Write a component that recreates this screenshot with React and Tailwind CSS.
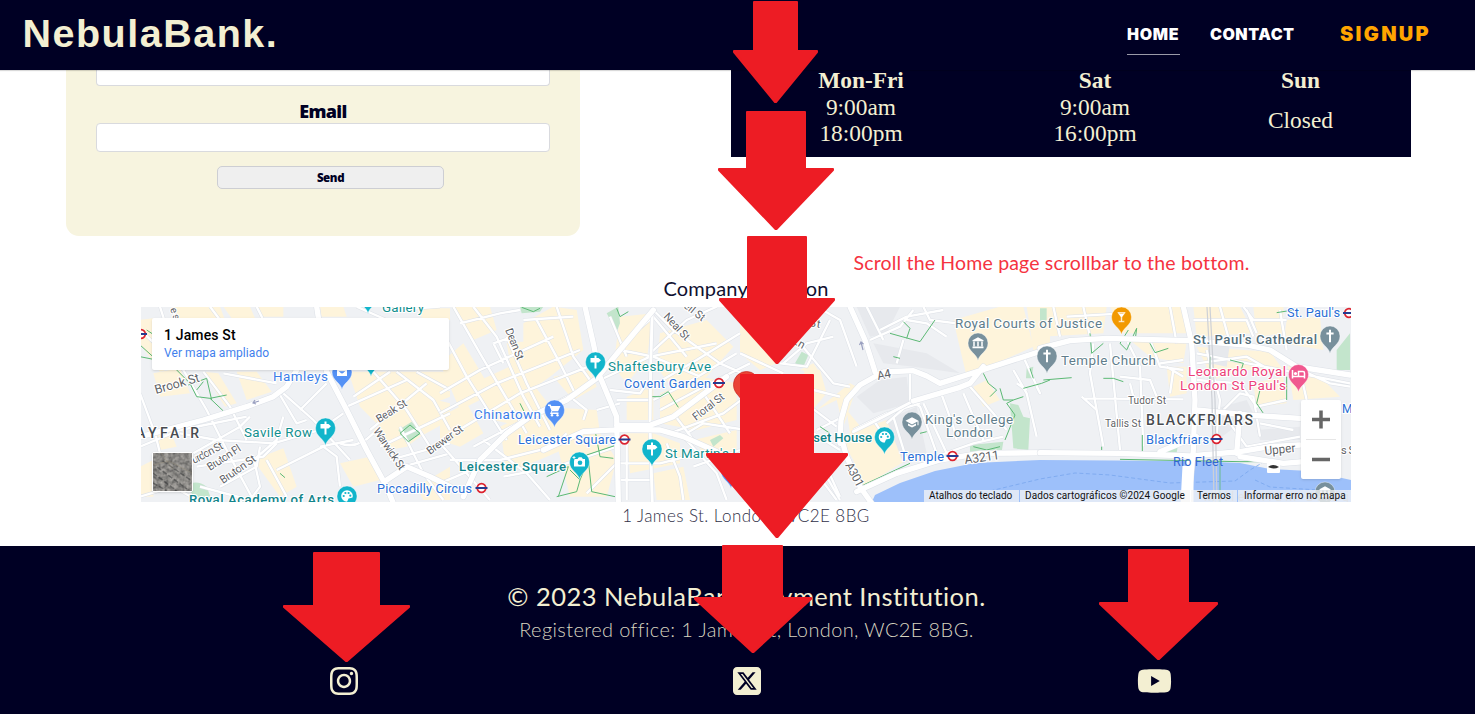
import React from "react";
import { FaInstagram, FaSquareXTwitter, FaYoutube } from "react-icons/fa6";

const TEAL = "#12b5cb";
const BLUE = "#5491f5";
const SLATE = "#78909c";

function Glyph({ kind, color }) {
  const s = { fill: "none", stroke: "#fff", strokeWidth: 2, strokeLinecap: "butt" };
  switch (kind) {
    case "sign":
      return <path d="M-5 -4h8l2.5 2.2L3 .5h-8zM-1 -6.500h2V6.500h-2z" fill="#fff" />;
    case "cart":
      return (
        <g fill="#fff">
          <path d="M-6.500 -5.500h2.600l.7 1.500H6L3.600 1.200H-2.200l-.8 1.300H4V4H-4.500L-3 .8-5 -4h-1.500z" />
          <circle cx="-2.500" cy="5.300" r="1.200" />
          <circle cx="3" cy="5.300" r="1.200" />
        </g>
      );
    case "bag":
      return <path d="M-5.500 -4h11v8.500h-11zM-2.500 -.8q2.500 3.600 5 0" fill="#fff" stroke={color} strokeWidth="1" />;
    case "camera":
      return (
        <g>
          <path d="M-5 -3h3l1.300-1.700h2.800L3.400 -3h2.100v7.500h-11V-1z" fill="#fff" />
          <circle cx=".5" cy=".7" r="2.300" fill={color} />
          <path d="M-5.500 -6v3M-7 -4.500h3" stroke="#fff" strokeWidth=".9" />
        </g>
      );
    case "palette":
      return (
        <g>
          <circle r="5.800" fill="#fff" />
          <path d="M0 6L1.500 2.600 6 1.500 5 6z" fill={color} />
          {[[-3.300, 0], [-1.600, -3], [1.600, -3], [3.300, -.3]].map(([x, y], i) => (
            <circle key={i} cx={x} cy={y} r="1.100" fill={color} />
          ))}
        </g>
      );
    case "court":
      return (
        <g fill="#fff">
          <path d="M-5.500 -2.800L0 -5.800 5.500 -2.800v1h-11zM-5.500 3.500h11V5.200h-11z" />
          <path d="M-4 -1.500V3.500M0 -1.500V3.500M4 -1.500V3.500" stroke="#fff" strokeWidth="1.500" />
        </g>
      );
    case "cross":
      return <path d="M0 -6.300V6.300M-3.600 -2.600H3.600" {...s} />;
    case "cap":
      return <path d="M-6.500 -1.200L0 -4.800 6.500 -1.200V3.200H5.500V-.6L0 2.400zM-4 1.400V3.600L0 5.500 4 3.600V1.400L0 3.500z" fill="#fff" />;
    case "drink":
      return <path d="M-4.500 -5h9L.8 .3V3.800H3V5.200H-3V3.800H-.8V.3zM-2 -3.600h4" fill="#fff" stroke={color} strokeWidth=".5" />;
    case "bed":
      return (
        <g>
          <path d="M-6 -4.500V4M-6 2h12M6 4V-1.500Q6 -3 4.500 -3H0V2" {...s} strokeWidth="1.500" />
          <circle cx="-3" cy="-1" r="1.600" fill="#fff" />
        </g>
      );
    default:
      return null;
  }
}

function Pin({ x, y, color, kind }) {
  return (
    <g transform={`translate(${x} ${y})`}>
      <path d="M0 17.500C-1 11-10 8.500-10 0A10 10 0 0 1 10 0C10 8.500 1 11 0 17.500z" fill={color} stroke="#fff" strokeOpacity=".55" strokeWidth=".7" />
      <Glyph kind={kind} color={color} />
    </g>
  );
}

function Tube({ x, y }) {
  return (
    <g transform={`translate(${x} ${y})`}>
      <circle r="4.300" fill="#fff" stroke="#dc2430" strokeWidth="1.700" />
      <path d="M-6 0H6" stroke="#263b8f" strokeWidth="2" />
    </g>
  );
}

function Label({ x, y, w, size = 13.4, color = "#5f6368", weight = 400, rotate, children }) {
  return (
    <text
      x={x}
      y={y}
      textLength={w}
      fontSize={size}
      fill={color}
      fontWeight={weight}
      transform={rotate ? `rotate(${rotate} ${x} ${y})` : undefined}
      stroke="#fff"
      strokeWidth="2.200"
      strokeLinejoin="round"
      paintOrder="stroke"
    >
      {children}
    </text>
  );
}

const Streets = ({ d, w }) => (
  <>
    <path d={d} stroke="#dde1e7" strokeWidth={w + 3} />
    <path d={d} stroke="#fff" strokeWidth={w} />
  </>
);

/* Each tile is drawn in thirds of a map pixel. */
const tiles = [
  {
    x: 140,
    yellow:
      "M0 60L40 55 95 205 60 215 0 130zM100 20H240L255 60H120zM250 20H330L345 55H275zM540 20H610L620 50H545zM830 25H930V60H850zM40 220L120 205 150 280 60 290zM190 215L235 220 290 310 255 320zM290 215H350L395 275 320 300zM350 20H430V50H360zM625 215H930V290L830 330 780 400 720 380 660 320zM700 390L790 330 890 300 930 310V360L840 410 800 440 745 450zM340 480L430 445 470 560 420 590zM600 490L690 470 720 540 640 560zM40 400L90 390 110 440 60 450zM0 500L40 480V590H0zM830 560L930 500V600H850z",
    small:
      "M0 90L130 210 200 330 270 470 340 600M60 20L120 210M0 280L45 400 60 460M190 215L270 320 320 420M250 220L410 250M0 440L120 390 320 350M430 280L520 360 630 480M480 330L560 250M420 285L470 370 500 360M340 480L410 420 430 350M120 400L230 420 400 430 540 390 610 340M160 460L300 380 330 350M170 500L370 470 410 430M240 560L350 500 360 440M340 470L360 560 330 600M410 510L550 440 590 470 600 560M380 480L440 590M540 440L640 420M600 430Q650 450 700 400M640 290L750 215M620 320L800 240M690 390L860 250M720 440L930 340M750 480L930 430M780 380L850 520 910 600M700 215L800 330 870 440M770 215L880 300 930 390M830 215L930 270M790 500L930 460M0 590L100 560 170 600M180 560L330 600M210 20L240 60M350 20L370 60M770 30L900 20M650 20L740 60",
    main: "M0 410L190 360 320 320 400 290 440 260 470 210M530 20L560 215 620 330 680 450 740 560 760 610M740 540L800 500 870 530 930 560",
    park: "M140 560Q165 535 200 560L215 600H170zM775 390L815 365 845 400 800 430z",
    paths: "M0 135L50 180 0 170M110 210L150 250 170 290 210 295 250 333M145 255L200 235 215 300M170 270L190 245M210 295L260 285M420 520L435 533M20 90L50 110M780 400L810 375 840 400 805 425z",
  },
  {
    x: 440,
    yellow:
      "M40 20H150L170 90 100 120zM250 70L340 20 410 30 430 150 330 230 250 190zM0 190L70 130 160 280 60 330zM200 130L290 120 330 230 230 300zM100 250L230 190 340 330 250 380 160 360zM340 230L450 210 470 260 400 300zM180 380L300 320 470 330 480 400 320 470 200 520zM350 430L480 400 530 480 500 590 390 590zM540 50L640 40 620 180 560 250 520 200zM660 100L800 60 880 140 800 230 700 270 650 200zM560 290L640 260V360H560zM660 280L780 230 890 250V360L770 390 660 370zM560 400H640L720 430V490L570 520zM760 420L890 390V480L800 470zM640 520L730 500 750 600H650zM0 350L80 310 130 400 60 440 0 420z",
    small:
      "M0 80L80 230 200 420M40 20L120 160 220 330 260 400M60 70L180 40 240 30M100 20L170 110 250 290 300 380M160 130L220 110M160 130L190 190M0 280L120 210 340 110M0 340L170 250 420 150M40 400L240 280 470 190M100 440L290 340 400 280M200 110L260 250 330 390M290 60L360 190 410 290M350 20L400 170 450 240M250 60L400 50M130 420L260 520 330 600M0 430L80 520 150 600M30 480H180L340 440 380 400M0 550L140 490M390 290L440 330 430 360M190 530L350 500 530 440M440 580L540 480M530 300H630M510 270L600 280 620 250M480 240L630 170 830 130M540 150L640 170 780 230M560 120L640 50 740 170M640 30L700 90 840 190 930 230M630 160L740 60 830 20M650 250L770 180 900 100M640 300L740 250 890 160M660 330L830 240 930 190M690 400L850 340 930 280M700 340L760 420M790 280L870 400M540 490L660 490 740 470M560 430V600M680 430L720 530 730 600M730 410L830 520 860 600M540 540H640M760 500L900 450M740 400L790 370 920 390M510 50L560 170M470 330L540 310",
    main: "M435 20L460 130 480 230 530 350 535 610M640 30L540 150 470 235 380 300 270 350 200 400 120 480 70 590M530 376H630L700 350 780 290 860 230M310 450L430 395 550 388 660 390 730 410 830 455",
    mid: "M637 30L632 200 630 380 637 610",
    park: "M240 20H310L300 35 245 40zM500 40L535 20 540 70 530 95zM810 420L840 405 850 415 820 440z",
    paths: "M245 22L280 35 300 25M530 25L540 50 565 35M240 310L265 360M630 290L660 290 685 275 715 322M440 465L530 435M465 390L480 470 520 475M385 500L355 590M390 510L420 540 445 480 455 575 525 590M350 590L410 575 420 540M320 530L385 500",
  },
  {
    x: 740,
    yellow:
      "M0 70L60 70 110 190 60 210 0 160zM190 200L240 210 260 280 200 350V260zM230 330L330 250 350 260 310 380 290 300zM320 330L370 390 330 400zM640 60L780 20H850L880 140 680 230zM300 410L440 360 500 480 370 560 340 480zM700 260L740 240 780 300 730 320zM860 20H930V150H880zM180 210L220 190 240 220z",
    gray:
      "M350 20H480L440 100 390 110zM350 290L420 240 500 230 510 310 400 340zM400 130L560 160 660 220 520 200 430 190zM440 360L530 320 560 460 490 490z",
    small:
      "M0 160L130 220M120 190L200 200 270 60M180 130L280 250 330 260M230 20L300 60 350 200M130 190L200 130 280 110M210 320L290 380M220 270L300 290M230 390L310 350M220 400L300 450M250 480L300 590M230 520L290 600M380 20L430 120M420 90L500 50 610 30M390 120L480 80 520 30M500 60L560 70 620 110M490 120L470 190M340 390L440 340 540 310M510 220L510 300 540 320 590 460M440 370L520 300 650 270M600 270L640 380 650 420M550 310L620 460M690 260L760 340 800 390M670 280L730 420M820 210L860 280 890 410M850 170L900 280 890 260M400 360L420 390M460 350L500 480M830 250L860 270M300 600L260 530M560 480L700 430 790 410M550 20L570 60 650 70",
    main: "M330 20L375 120 405 215M300 430L303 360 320 300 360 255 430 216 520 212 560 228 600 250 680 225 930 145M520 303L660 262 690 250 730 200M300 400L320 470 360 560 395 610M350 575L470 520 600 480 720 460 930 458",
    mid: "M340 395L430 350 520 303",
    park: "M165 190L185 155 205 165 190 200zM810 310L835 315 850 350 870 355 865 450 820 445zM690 435L790 425 785 455H690zM860 205L880 200 875 235H858z",
    paths: "M450 100L540 125 585 60M490 65L510 85 500 115M460 170L480 175M730 220L745 250 770 270 750 290M780 265L790 300 820 300 800 310 825 345 795 420M820 300L850 290M850 265L905 250 930 240M870 205L880 235M700 440L740 450 780 440M370 555L510 490M540 400L560 395M240 380L270 400",
  },
  {
    x: 1040,
    yellow:
      "M0 20H200L190 100 0 110zM210 20H430L440 100H250zM460 20H600L640 100 470 110zM640 20H730V100L650 110zM740 60L840 50 850 150 730 130zM270 120L440 125 430 190 330 170zM470 140L690 155 730 210 600 210 520 240zM740 180L850 240 900 290 760 300zM640 250L730 230 740 310 650 320zM380 200H440V280L390 290z",
    gray: "M510 330L620 300 640 340 520 430zM650 390L780 380V420H660zM500 120L570 130 560 200 510 190z",
    small:
      "M40 20L60 110M130 20L150 110M210 130L240 450M160 130L150 220 190 440M260 120L300 200 310 440M330 120L360 200 430 210M130 295L430 298M125 290L170 330M240 230L330 240 350 290M380 200L430 230M460 60L620 60 640 110M540 20L570 130M610 20L640 60 740 60M620 30L650 100M720 30L740 150M470 190L620 170 690 210M470 240L600 250 650 320 740 300M500 150L540 300 530 400M550 330L600 280 640 290 660 410M570 370L620 440 780 410M360 190L430 180M740 190L870 250 930 260M780 210L800 300M470 160L930 250M400 210L390 280M390 20L410 130M80 50L250 40M660 370L760 390M270 250L280 290",
    main: "M0 145L90 122 200 115 450 122 620 135 690 150 770 200 930 225M430 20L455 130 465 300 460 450 445 610M470 330L620 345 780 355M0 458L240 460 450 468 600 455 690 440 780 435M470 410L360 455M600 340L590 460M600 470L730 490 850 480",
    park: "M890 150L930 100V210H890zM0 25H20V60L0 70zM370 455L415 430 410 458z",
    paths: "M150 100L155 160 190 130M265 90L240 130 260 150 290 85 285 125M330 130L345 158 385 145M10 240L95 233M190 235L220 235 250 245M710 38L760 30M510 170V240L500 260M570 180L610 190 600 220M740 230V300M660 270L650 310 670 340M185 440V450M307 405V470M240 478L600 485 700 485",
  },
];

function CityMap() {
  return (
    <svg viewBox="141 307 1210 195" className="block h-[195px] w-[1210px]" fontFamily="Roboto, sans-serif">
      <rect x="141" y="307" width="1210" height="195" fill="#eff1f4" />
      {tiles.map((t) => (
        <g key={t.x} transform={`translate(${t.x} 300) scale(.33333)`}>
          <path d={t.yellow} fill="#fef4db" />
          {t.gray && <path d={t.gray} fill="#e7e9ed" />}
          <path d={t.park} fill="#c3e5cc" />
        </g>
      ))}
      <path d="M871 504L875 495 900 483 935 471 975 463 1040 460 1190 461 1240 463 1270 469 1310 471 1351 480V504z" fill="#9dc0fa" />
      <path d="M965 497L1040 479 1075 473 1110 475 1170 483 1235 481 1250 470 1262 463M1255 480L1270 487 1351 492" fill="none" stroke="#79a6ee" strokeWidth=".8" strokeDasharray="4 2.500" />
      {tiles.map((t) => (
        <g key={t.x} transform={`translate(${t.x} 300) scale(.33333)`} fill="none" strokeLinejoin="round">
          <Streets d={t.small} w={7} />
          <path d={t.paths} stroke="#5bb974" strokeWidth="3" />
        </g>
      ))}
      {tiles.map((t) => (
        <g key={t.x} transform={`translate(${t.x} 300) scale(.33333)`} fill="none" strokeLinejoin="round" strokeLinecap="round">
          {t.mid && <Streets d={t.mid} w={9} />}
          <Streets d={t.main} w={16} />
        </g>
      ))}
      <path d="M1190 461V504M1186 466L1184 504" stroke="#fff" strokeWidth="7" fill="none" />
      <path d="M1207 307L1212 400 1214 502M1210 307L1215 400 1217 502" stroke="#cdd0d6" strokeWidth="1.200" fill="none" />
      <path d="M1220 460V502" stroke="#5bb974" strokeWidth=".8" />

      <g>
        <Label x={156} y={394} w={46} size={12.500} rotate={-16}>Brook St</Label>
        <Label x={194} y={464} w={34} size={11} rotate={-28}>urdon St</Label>
        <Label x={210} y={471} w={38} size={11} rotate={-33}>Bruton Pl</Label>
        <Label x={223} y={484} w={41} size={11} rotate={-35}>Bruton St</Label>
        <Label x={379} y={423} w={34} size={11} rotate={-32}>Beak St</Label>
        <Label x={373} y={431} w={48} size={11} rotate={56}>Warwick St</Label>
        <Label x={430} y={455} w={42} size={11} rotate={-36}>Brewer St</Label>
        <Label x={505} y={330} w={33} size={11} rotate={68}>Dean St</Label>
        <Label x={663} y={317} w={33} size={11} rotate={47}>Neal St</Label>
        <Label x={683} y={307} w={24} size={11} rotate={38}>ell St</Label>
        <Label x={696} y={421} w={37} size={11} rotate={-38}>Floral St</Label>
        <Label x={809} y={326} w={11} size={11} rotate={10}>St</Label>
        <Label x={792} y={343} w={12} size={11} rotate={30}>Ln</Label>
        <Label x={878} y={380} w={14} size={12} rotate={-12}>A4</Label>
        <Label x={845} y={465} w={26} size={12} rotate={62}>A301</Label>
        <Label x={965} y={464} w={35} size={12.500} rotate={-8}>A3211</Label>
        <Label x={1128} y={404} w={38} size={10.200}>Tudor St</Label>
        <Label x={1105} y={427} w={36} size={10.200}>Tallis St</Label>
        <Label x={1265} y={455} w={31} size={12} rotate={-6}>Upper</Label>
        <Label x={1341} y={454} w={14} size={11}>s S</Label>
        <Label x={170} y={309} w={12} size={10} rotate={70}>es</Label>
        <Label x={136} y={438} w={63} size={14} color="#484b50" weight={500}>AYFAIR</Label>
        <Label x={1146} y={425} w={107} size={14} color="#484b50" weight={500}>BLACKFRIARS</Label>
      </g>

      <g stroke="none">
        <Pin x={368} y={296} color={TEAL} kind="sign" />
        <Pin x={371} y={359} color={TEAL} kind="sign" />
        <Pin x={342} y={372} color={BLUE} kind="bag" />
        <Pin x={325.500} y={428} color={TEAL} kind="sign" />
        <Pin x={347} y={496} color={TEAL} kind="palette" />
        <Pin x={595.500} y={362} color={TEAL} kind="sign" />
        <Pin x={554.500} y={410} color={BLUE} kind="cart" />
        <Pin x={579.500} y={462} color={TEAL} kind="camera" />
        <Pin x={652} y={449} color={TEAL} kind="sign" />
        <Pin x={884.500} y={437} color={TEAL} kind="palette" />
        <Pin x={912} y={422} color={SLATE} kind="cap" />
        <Pin x={978} y={343} color={SLATE} kind="court" />
        <Pin x={1047} y={356} color={SLATE} kind="cross" />
        <Pin x={1121.500} y={317} color="#f29900" kind="drink" />
        <Pin x={1330} y={336} color={SLATE} kind="cross" />
        <Pin x={1298.500} y={374.500} color="#f0588f" kind="bed" />
        <Pin x={1325} y={492} color={SLATE} kind="court" />
        <Pin x={731} y={471} color={BLUE} kind="cart" />
        <path d="M747 412C745 397 733.500 396 733.500 384.500A13 13 0 0 1 759.500 384.500C760 396 749 397 747 412z" fill="#ea4335" stroke="#c5221f" strokeWidth=".7" />
      </g>

      <g>
        <Label x={382} y={312} w={42} color="#12908f">Gallery</Label>
        <Label x={273} y={381} w={55} color="#3b7de8">Hamleys</Label>
        <Label x={244} y={437} w={68} color="#12908f">Savile Row</Label>
        <Label x={189} y={504} w={145} size={13.200} color="#12848a" weight={500}>Royal Academy of Arts</Label>
        <Label x={377} y={492.500} w={95} size={12.600} color="#2a6fd6">Piccadilly Circus</Label>
        <Label x={474} y={419} w={67} color="#3b7de8">Chinatown</Label>
        <Label x={518} y={444} w={98} size={12.600} color="#2a6fd6">Leicester Square</Label>
        <Label x={459} y={471} w={107} size={13.200} color="#12848a" weight={500}>Leicester Square</Label>
        <Label x={608} y={371} w={103} color="#12908f">Shaftesbury Ave</Label>
        <Label x={624} y={387.500} w={87} size={12.600} color="#2a6fd6">Covent Garden</Label>
        <Label x={665} y={458} w={82} color="#12908f">St Martin's La</Label>
        <Label x={775} y={442} w={97} size={13.200} color="#12848a" weight={500}>Somerset House</Label>
        <Label x={900} y={460.500} w={44} size={12.800} color="#2a6fd6">Temple</Label>
        <Label x={925} y={424} w={88} color="#607d8b">King's College</Label>
        <Label x={946} y={437} w={47} color="#607d8b">London</Label>
        <Label x={955} y={328} w={147} color="#607d8b">Royal Courts of Justice</Label>
        <Label x={1061} y={365} w={95} color="#607d8b">Temple Church</Label>
        <Label x={1193} y={344} w={124} size={13.200} color="#546e7a" weight={500}>St. Paul's Cathedral</Label>
        <Label x={1188} y={376} w={98} color="#ec407a">Leonardo Royal</Label>
        <Label x={1180} y={390} w={106} color="#ec407a">London St Paul's</Label>
        <Label x={1287} y={317} w={53} size={12.800} color="#2a6fd6">St. Paul's</Label>
        <Label x={1146} y={443.500} w={63} size={12.800} color="#2a6fd6">Blackfriars</Label>
        <Label x={1342} y={413} w={10} size={12} color="#2a6fd6">M</Label>
        <text x="1173" y="466" textLength="50" fontSize="12.500" fill="#3367d0">Rio Fleet</text>
        <text x="1204" y="501" textLength="155" fontSize="12.500" fill="#9aa9bb">Millennium Bridge</text>
      </g>
      <Tube x={141} y={334} />
      <Tube x={481.500} y={488} />
      <Tube x={624.500} y={439.500} />
      <Tube x={719} y={383} />
      <Tube x={952.500} y={456} />
      <Tube x={1216.500} y={439} />
      <Tube x={1349} y={313} />
      <rect x="1267" y="461" width="13" height="12" rx="1" fill="#fff" />
      <path d="M1268 467q5-4 11 0-5 3-11 0z" fill="#333" />
      <path d="M259 401l-6 2m2-3l-2 3 3 1M863 350l-2-8m-1.500 3l1.500-3 2.500 2" fill="none" stroke="#9aa0c0" strokeWidth="1.200" />
    </svg>
  );
}

function SatelliteThumb() {
  return (
    <div className="absolute top-[145px] left-[11px] h-[40px] w-[41px] overflow-hidden rounded-[2px] border border-white shadow">
      <svg viewBox="0 0 39 38" className="block h-full w-full">
        <filter id="terrain" x="0" y="0" width="100%" height="100%">
          <feTurbulence type="fractalNoise" baseFrequency=".25" numOctaves="4" seed="4" />
          <feColorMatrix values=".55 0 0 0 .13  .53 0 0 0 .13  .5 0 0 0 .13  0 0 0 0 1" />
          <feComponentTransfer>
            <feFuncR type="gamma" exponent="1.400" />
            <feFuncG type="gamma" exponent="1.400" />
            <feFuncB type="gamma" exponent="1.400" />
          </feComponentTransfer>
        </filter>
        <rect width="39" height="38" fill="#5f5f5c" />
        <rect width="39" height="38" filter="url(#terrain)" opacity=".9" />
        <path d="M0 30L14 38M0 20L24 38M4 14L34 36M10 8L39 28" stroke="#2d2f30" strokeWidth="1.500" strokeOpacity=".45" strokeDasharray="5 2" fill="none" />
        <path d="M0 12L16 8 39 20M8 0L20 16" stroke="#9a907a" strokeOpacity=".4" fill="none" />
      </svg>
    </div>
  );
}

const arrows = [
  { l: 733, a: 753, b: 798, r: 818, top: 1, wing: 50, tip: 103 },
  { l: 718, a: 746, b: 806, r: 834, top: 111, wing: 168, tip: 230 },
  { l: 719, a: 747, b: 807, r: 835, top: 236, wing: 298, tip: 364 },
  { l: 706, a: 740, b: 814, r: 848, top: 374, wing: 453, tip: 538 },
  { l: 694, a: 722, b: 783, r: 812, top: 545, wing: 597, tip: 653 },
  { l: 283, a: 313, b: 380, r: 410, top: 552, wing: 605, tip: 662 },
  { l: 1099, a: 1128, b: 1189, r: 1218, top: 549, wing: 602, tip: 660 },
];

function Arrows() {
  return (
    <svg viewBox="0 0 1475 714" className="pointer-events-none absolute top-0 left-0 z-20 h-[714px] w-[1475px]">
      {arrows.map(({ l, a, b, r, top, wing, tip }) => {
        const c = (l + r) / 2;
        return (
          <path
            key={`${l}-${top}`}
            d={`M${a + 1} ${top + 1}H${b - 1}V${wing + 1}H${r - 1}V${wing + 2}L${c + 0.5} ${tip - 1}H${c - 0.5}L${l + 1} ${wing + 2}V${wing + 1}H${a + 1}z`}
            fill="#ed1c24"
            stroke="#ed1c24"
            strokeWidth="2"
            strokeLinejoin="round"
          />
        );
      })}
    </svg>
  );
}

function Header() {
  return (
    <header className="relative z-10 flex h-[70px] items-center justify-between bg-[#000024] pr-[45px] pl-[22.500px] shadow-[0_1px_1px_rgba(0,0,0,0.15)]">
      <div className="pb-[3px] font-['Liberation_Sans',sans-serif] text-[39.500px] leading-none font-bold tracking-[1.500px] text-[#f3efd2]">NebulaBank.</div>
      <nav className="flex items-start pt-[8px] font-['Inter',sans-serif] font-black">
        <a className="mr-[30px] w-[53px] border-b border-[#9a9aa8] pb-[10px] text-[16px] leading-[20px] tracking-[0.700px] text-white">HOME</a>
        <a className="mr-[46px] w-[84px] text-[16px] leading-[20px] tracking-[0.500px] text-white">CONTACT</a>
        <a className="w-[90px] text-[20px] leading-[20px] tracking-[2.300px] text-[#ffa500]">SIGNUP</a>
      </nav>
    </header>
  );
}

function ContactForm() {
  return (
    <form className="flex h-[166px] w-[514px] flex-col items-center rounded-b-[13px] bg-[#f7f4df] px-[30px] text-[#000024]">
      <div className="h-[16px] w-full shrink-0 rounded-b-[4px] border border-t-0 border-[#d9dade] bg-white" />
      <label className="mt-[13px] h-[24px] font-['Open_Sans',sans-serif] text-[18px] leading-[24px] font-extrabold tracking-[-0.700px]">Email</label>
      <div className="h-[29px] w-full shrink-0 rounded-[4px] border border-[#d9dade] bg-white" />
      <button type="button" className="mt-[14px] ml-[15px] h-[23px] w-[227px] shrink-0 rounded-[5px] border border-[#cdced3] bg-[#efefef] font-['Open_Sans',sans-serif] text-[11.500px] leading-none font-extrabold tracking-[-0.400px]">
        Send
      </button>
    </form>
  );
}

function OpeningHours() {
  return (
    <section className="grid h-[87px] w-[680px] grid-cols-[260px_208px_203px] bg-[#000024] text-center font-['Liberation_Serif',serif] text-[23.400px] leading-[26px] text-[#f3efd2]">
      <div className="-mt-[3px]">
        <div className="pb-px font-bold">Mon-Fri</div>
        <div>9:00am</div>
        <div>18:00pm</div>
      </div>
      <div className="-mt-[3px]">
        <div className="pb-px font-bold">Sat</div>
        <div>9:00am</div>
        <div>16:00pm</div>
      </div>
      <div className="-mt-[3px]">
        <div className="pb-[14px] font-bold">Sun</div>
        <div>Closed</div>
      </div>
    </section>
  );
}

function Location() {
  return (
    <section className="flex flex-col items-center font-['Lato',sans-serif] text-[#101030]">
      <div className="w-[1210px]">
        <h2 className="flex h-[31px] items-center justify-center pb-[7px] text-[20px] leading-none whitespace-nowrap tracking-[0.150px]">Company Location</h2>
        <div className="relative h-[195px] overflow-hidden">
          <CityMap />
          <div className="absolute top-[11px] left-[11px] h-[52px] w-[297px] rounded-[2px] bg-white px-3 pt-[9px] font-['Roboto',sans-serif] shadow">
            <div className="text-[14px] leading-[17px] font-medium tracking-[0.150px] text-black">1 James St</div>
            <div className="pt-px text-[12px] leading-[17px] tracking-[0.080px] text-[#427fed]">Ver mapa ampliado</div>
          </div>
          <SatelliteThumb />
          <div className="absolute top-[93px] right-[10px] flex h-[79px] w-[40px] flex-col items-center rounded-[2px] bg-white shadow">
            <svg viewBox="0 0 40 79" className="block h-full w-full">
              <path d="M11 19.500H29M20 10.500V28.500M11 59.500H29" stroke="#666" strokeWidth="3.500" />
              <path d="M5 39.500H35" stroke="#e6e6e6" />
            </svg>
          </div>
          <div className="absolute right-0 bottom-0 flex h-[12px] w-[427px] gap-px font-['Roboto',sans-serif] text-[10px] leading-[12px] whitespace-nowrap text-[#111]">
            <span className="w-[95px] bg-[#f5f5f5]/75 pl-[5px]">Atalhos do teclado</span>
            <span className="w-[170px] bg-[#f5f5f5]/75 pl-[5px] tracking-[0.080px]">Dados cartográficos ©2024 Google</span>
            <span className="w-[46px] bg-[#f5f5f5]/75 pl-[6px]">Termos</span>
            <span className="flex-1 bg-[#f5f5f5]/75 pl-[6px] tracking-[0.080px]">Informar erro no mapa</span>
          </div>
        </div>
        <p className="flex h-[30px] items-center justify-center pb-[3px] text-[17px] leading-none font-light tracking-[0.440px] whitespace-nowrap text-[#303048]">1 James St. London, WC2E 8BG</p>
      </div>
    </section>
  );
}

function Footer() {
  return (
    <footer className="h-[168px] bg-[#000024] pt-[33px] font-['Lato',sans-serif] text-[#f3efd2]">
      <div className="flex w-[1493px] flex-col items-center whitespace-nowrap">
        <p className="text-[25.500px] leading-[34px] tracking-[0.460px]">© 2023 NebulaBank Payment Institution.</p>
        <p className="text-[20px] leading-[32px] font-light tracking-[0.390px] text-[#d8d5c0]">Registered office: 1 James St, London, WC2E 8BG.</p>
      </div>
      <div className="ml-[141px] grid w-[1215px] grid-cols-[406px_400px_414px] pt-[20px]">
        <FaInstagram className="h-[32px] w-[28px] justify-self-center" />
        <FaSquareXTwitter className="h-[32px] w-[28px] justify-self-center" />
        <FaYoutube className="h-[32px] w-[35px] justify-self-center" />
      </div>
    </footer>
  );
}

export default function App() {
  return (
    <div className="relative h-[714px] w-[1475px] overflow-hidden bg-white">
      <Header />
      <main className="h-[476px]">
        <div className="flex h-[206px] items-start gap-[151px] pl-[66px]">
          <ContactForm />
          <OpeningHours />
        </div>
        <div className="w-[1492px]">
          <Location />
        </div>
      </main>
      <Footer />
      <Arrows />
      <p className="absolute top-[251px] left-[853.500px] font-['Lato',sans-serif] text-[19.500px] leading-[24px] tracking-[0.170px] whitespace-nowrap text-[#f5333f]">Scroll the Home page scrollbar to the bottom.</p>
    </div>
  );
}
